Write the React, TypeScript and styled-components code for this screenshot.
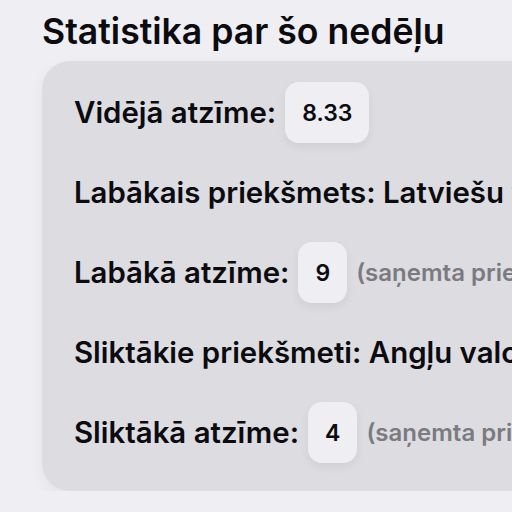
import React from "react";
import styled, { createGlobalStyle } from "styled-components";

const GlobalStyle = createGlobalStyle`
    html, body {
        margin: 0;
        padding: 0;
        background: #eeeef3;
    }
    body {
        font-family: Inter, "Noto Sans", sans-serif;
        color: #0b0b10;
        overflow: hidden;
    }
`;

type Stat = {
    label: string;
    value?: string;
    text?: string;
    note?: string;
};

const stats: Stat[] = [
    { label: "Vidējā atzīme:", value: "8.33" },
    { label: "Labākais priekšmets:", text: "Latviešu valoda" },
    { label: "Labākā atzīme:", value: "9", note: "(saņemta priekšmetā Latviešu valoda)" },
    { label: "Sliktākie priekšmeti:", text: "Angļu valoda, Matemātika" },
    { label: "Sliktākā atzīme:", value: "4", note: "(saņemta priekšmetā Angļu valoda)" },
];

export default function App() {
    return (
        <>
            <GlobalStyle />
            <Page>
                <Title>Statistika par šo nedēļu</Title>
                <Card>
                    {stats.map((s) => (
                        <Row key={s.label}>
                            <Label>
                                {s.label}
                                {s.text && ` ${s.text}`}
                            </Label>
                            {s.value && <Badge>{s.value}</Badge>}
                            {s.note && <Note>{s.note}</Note>}
                        </Row>
                    ))}
                </Card>
            </Page>
        </>
    );
}

const Page = styled.div`
    width: 1000px;
    padding: 12px 0 0 42px;
`;

const Title = styled.h1`
    margin: 0 0 9px;
    font-size: 35.6px;
    font-weight: 600;
    line-height: 40px;
`;

const Card = styled.div`
    display: flex;
    flex-direction: column;
    gap: 19px;
    padding: 21px 32px 28px;
    border-radius: 28px;
    background: #dddce1;
    box-shadow: 0 6px 16px rgba(0, 0, 0, 0.05);
`;

const Row = styled.div`
    display: flex;
    align-items: center;
    gap: 9px;
    height: 61px;
    white-space: nowrap;
`;

const Label = styled.span`
    font-size: 29.4px;
    font-weight: 600;
`;

const Badge = styled.span`
    display: flex;
    align-items: center;
    justify-content: center;
    height: 61px;
    padding: 0 17px;
    box-sizing: border-box;
    border-radius: 14px;
    background: #eeeef3;
    font-size: 23px;
    font-weight: 600;
    box-shadow: 0 4px 10px rgba(0, 0, 0, 0.06);
`;

const Note = styled.span`
    font-size: 24px;
    font-weight: 600;
    color: #7a7a80;
`;
